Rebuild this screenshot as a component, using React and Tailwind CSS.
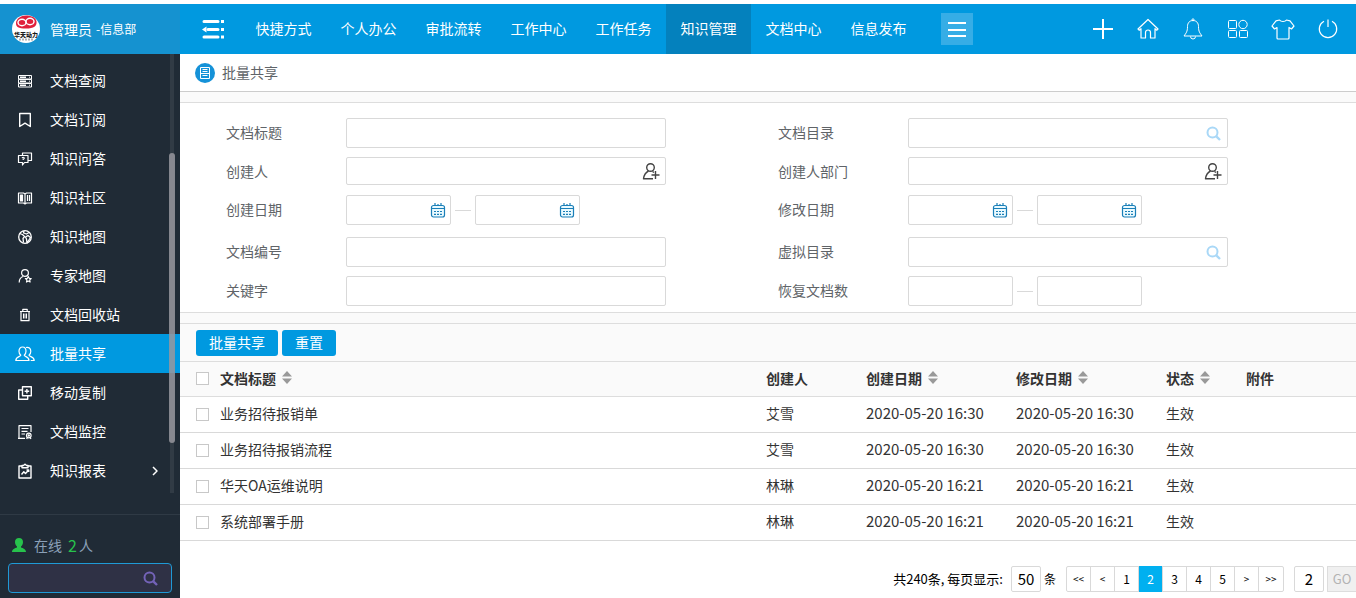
import clsx from 'clsx'

const menus = ['快捷方式', '个人办公', '审批流转', '工作中心', '工作任务', '知识管理', '文档中心', '信息发布']

const rows = [
  { title: '业务招待报销单', author: '艾雪', date: '2020-05-20 16:30', status: '生效' },
  { title: '业务招待报销流程', author: '艾雪', date: '2020-05-20 16:30', status: '生效' },
  { title: '华天OA运维说明', author: '林琳', date: '2020-05-20 16:21', status: '生效' },
  { title: '系统部署手册', author: '林琳', date: '2020-05-20 16:21', status: '生效' },
]

const pages = ['<<', '<', '1', '2', '3', '4', '5', '>', '>>']

function Svg({ size = 16, w, children, className, sw = 1.2 }) {
  return (
    <svg
      width={w || size}
      height={size}
      viewBox={`0 0 ${w || size} ${size}`}
      fill="none"
      stroke="currentColor"
      strokeWidth={sw}
      strokeLinejoin="round"
      className={className}
      aria-hidden="true"
    >
      {children}
    </svg>
  )
}

/* Sidebar icons */
const DocsIcon = () => (
  <Svg sw={1}>
    <path d="M1.500 2.500h13v3.500h-13zM1.500 6.500h13v3.500h-13zM1.500 10.500h13v3.500h-13z" />
    <path d="M3 4.200h6M3 8.200h6M3 12.200h6" strokeWidth="1.500" />
    <path d="M12 4.200h1M12 8.200h1M12 12.200h1" />
  </Svg>
)
const BookmarkIcon = () => (
  <Svg sw={1.4}><path d="M2.7 1.5h10.6v13L8 11.2l-5.3 3.3z" /></Svg>
)
const QaIcon = () => (
  <Svg>
    <path d="M5.500 4.500V2h9v7.500H11" />
    <path d="M1.500 4.500H11v7H7.500L5.500 14v-2.500h-4z" />
    <path d="M5 7q1.300-1.500 2.300 0q0 .8-1.100 1.300v.6" />
  </Svg>
)
const BookIcon = () => (
  <Svg>
    <path d="M1.500 3h5L8 4l1.500-1h5v10h-5L8 14l-1.500-1h-5zM8 4v10" />
    <path d="M3.500 5h2v6h-2z" fill="currentColor" />
    <path d="M10.500 5v6M12.500 5v6" />
  </Svg>
)
const GlobeIcon = () => (
  <Svg sw={1.300}>
    <circle cx="8" cy="8" r="6.300" />
    <path d="M2.500 4.500l3 1 2 2-1.500 2 .5 4" />
    <path d="M7 2l-.5 2 3 1L12 3.500M10 14l-.5-4L8.500 8l2.500-1.500 2.500 2z" />
  </Svg>
)
const ExpertIcon = () => (
  <Svg>
    <circle cx="8" cy="5" r="3.400" />
    <path d="M2.200 14.500c0-3.500 1.800-5.300 3.800-6" />
    <path d="M11.300 8.500l.9 1.800 2 .2-1.500 1.400.4 2.100-1.800-1-1.800 1 .4-2.100-1.500-1.400 2-.2z" />
  </Svg>
)
const TrashIcon = () => (
  <Svg>
    <path d="M3 4.500h10M5.800 4V2.300h4.400V4M4 4.500v9.200h8V4.500" />
    <path d="M6.500 6.500v5M8 6.500v5M9.500 6.500v5" strokeWidth="1" />
  </Svg>
)
const UsersIcon = () => (
  <Svg size={16} w={20}>
    <path d="M5.800 9.300C4.500 8.200 4 6.800 4 5.200 4 2.700 5.500 1 7.500 1S11 2.700 11 5.200c0 1.600-.5 3-1.800 4.100 0 1.200 4.800 1.200 4.800 5.200H.8c0-4 5-4 5-5.200z" />
    <path d="M11 1.500c2.800-.8 4.800 1 4.800 3.700 0 1.600-.5 3-1.800 4.100 0 1.200 5.200 1.200 5.200 5.200h-3.500" />
  </Svg>
)
const CopyIcon = () => (
  <Svg sw={1.400}>
    <path d="M5.500 1.700h8.800v9H5.500zM5.500 5H1.700v9.300h9v-3.600M9.900 3.900v4.600M7.600 6.200h4.600" />
  </Svg>
)
const MonitorIcon = () => (
  <Svg>
    <path d="M14 8V1.700H2v12.600h6M1 14.300h7M4.500 4.500h7M4.500 7.300h6M4.500 10h3.500" />
    <circle cx="11.800" cy="11.500" r="2.300" />
    <circle cx="11.800" cy="11.500" r=".6" />
    <path d="M10.300 13.500l-.6 1.500M13.300 13.500l.6 1.500" />
  </Svg>
)
const ReportIcon = () => (
  <Svg sw={1.400}>
    <path d="M5 3H2v12h12V3h-3" />
    <path d="M5 4.800V2.500h1.700Q8 0 9.300 2.500H11v2.300z" />
    <path d="M4.500 11.500l2.300-2.800 1.700 1.800 3-3.300M9.500 7h2.200v2" />
  </Svg>
)

const sideItems = [
  { label: '文档查阅', Icon: DocsIcon },
  { label: '文档订阅', Icon: BookmarkIcon },
  { label: '知识问答', Icon: QaIcon },
  { label: '知识社区', Icon: BookIcon },
  { label: '知识地图', Icon: GlobeIcon },
  { label: '专家地图', Icon: ExpertIcon },
  { label: '文档回收站', Icon: TrashIcon },
  { label: '批量共享', Icon: UsersIcon, active: true },
  { label: '移动复制', Icon: CopyIcon },
  { label: '文档监控', Icon: MonitorIcon },
  { label: '知识报表', Icon: ReportIcon, more: true },
]

/* Header tools */
const tools = [
  { label: '新建', icon: <Svg size={22} sw={2}><path d="M11 1v20M1 11h20" /></Svg> },
  {
    label: '首页',
    icon: (
      <Svg size={22}>
        <path d="M1 11L11 1.500 21 11l-1.300 1.200-1.700-1.500V20h-4.500v-5.500a2.500 2.500 0 0 0-5 0V20H4v-9.300l-1.700 1.500z" />
      </Svg>
    ),
  },
  {
    label: '消息',
    icon: (
      <Svg size={22} sw={1}>
        <path d="M11 2.500c-3.500 0-5.500 2.500-5.500 6 0 5.500-1.500 6.500-3.500 9.500h18c-2-3-3.500-4-3.500-9.500 0-3.500-2-6-5.500-6z" />
        <circle cx="11" cy="1.800" r="1" />
        <path d="M8.500 18.500a2.500 2.500 0 0 0 5 0" />
      </Svg>
    ),
  },
  {
    label: '应用',
    icon: (
      <Svg size={22} sw={1}>
        <rect x="1.500" y="2.500" width="8" height="8" rx="1" />
        <circle cx="16" cy="6.500" r="4.200" />
        <rect x="1.500" y="12.500" width="8" height="7" rx="1" />
        <rect x="12.500" y="12.500" width="8" height="7" rx="1" />
      </Svg>
    ),
  },
  {
    label: '皮肤',
    icon: (
      <Svg size={22} w={24}>
        <path d="M8.500 2C10 4 14 4 15.500 2l3.500.8L23 8l-2.500 3-2.500-1.500V20q0 1-1 1H7q-1 0-1-1V9.500L3.500 11 1 8l4-5.200z" />
      </Svg>
    ),
  },
  {
    label: '退出',
    icon: (
      <Svg size={22}>
        <path d="M7 3.200a8.700 8.700 0 1 0 8 0M11 1.500v7.500" />
      </Svg>
    ),
  },
]

function Logo() {
  return (
    <svg width="28" height="28" viewBox="0 0 28 28" aria-hidden="true">
      <circle cx="14" cy="14" r="14" fill="#fff" />
      <path d="M14 .5c4 0 10 1.500 10.500 6C25 11 22 13.500 14 13.500S4 12 4 8 9 .5 14 .5z" fill="#e0203c" />
      <ellipse cx="10" cy="7.500" rx="4" ry="3.200" fill="none" stroke="#fff" strokeWidth="1.400" />
      <ellipse cx="18" cy="6.500" rx="4" ry="3.200" fill="none" stroke="#fff" strokeWidth="1.400" />
      <text x="14" y="21.500" textAnchor="middle" fontSize="6" fontWeight="900" fill="#1b1b1b">华天动力</text>
      <path d="M7 24.500h14" stroke="#b0b0b0" strokeWidth="2" strokeDasharray="2 1" />
    </svg>
  )
}

function SearchGlyph({ className }) {
  return (
    <Svg size={15} sw={2} className={className}>
      <circle cx="6.500" cy="6.500" r="5" />
      <path d="M10.300 10.300l3.700 3.700" strokeWidth="2.400" />
    </Svg>
  )
}

function UserAdd() {
  return (
    <Svg size={18} className="text-[#444]" sw={1.400}>
      <circle cx="8.500" cy="5.500" r="3.800" />
      <path d="M6.500 9C3.500 10.500 2 13 1.500 16.800H11M10.500 9.500l1.500 1M13.500 9v8M9.500 13h8" />
    </Svg>
  )
}

function Calendar() {
  return (
    <Svg size={16} className="text-[#1a7fb8]">
      <rect x="1.500" y="3.500" width="13" height="11.500" rx="2" fill="#eafaff" />
      <path d="M1.500 6.500h13M5 1v3M8 2v2M11 1v3" />
      <path d="M4 9.500h8M4 12.300h8" strokeDasharray="2 1" />
    </Svg>
  )
}

const glyphs = { search: <SearchGlyph className="text-[#a9d8f7]" />, user: <UserAdd />, date: <Calendar /> }

function Box({ id, label, icon, className }) {
  return (
    <div className={clsx('flex items-center rounded-xs border border-[#d9d9d9] bg-white', className)}>
      <input id={id} aria-label={label} className="h-full w-full min-w-0 flex-1 px-2 outline-none" />
      {icon && (
        <button type="button" aria-label="选择" className={icon === 'date' ? 'pr-1' : icon === 'user' ? 'pr-[5px]' : 'pr-1.5'}>
          {glyphs[icon]}
        </button>
      )}
    </div>
  )
}

function Field({ id, label, type, icon, wide, className }) {
  return (
    <div className={clsx('flex items-start', className)}>
      <label htmlFor={id} className={clsx('shrink-0 leading-7', wide ? 'w-[130px]' : 'w-[120px]')}>
        {label}
      </label>
      {type === 'range' ? (
        <div className="flex items-center">
          <Box id={id} icon={icon} className="h-[30px] w-[105px]" />
          <span className="mx-1 h-px w-4 bg-[#d9d9d9]" />
          <Box label={`${label}止`} icon={icon} className="h-[30px] w-[105px]" />
        </div>
      ) : (
        <Box id={id} icon={icon} className={clsx('w-full max-w-80', icon === 'user' ? 'h-[28px]' : 'h-[30px]')} />
      )}
    </div>
  )
}

function SortHead({ children, className }) {
  return (
    <th className={clsx('font-bold', className)}>
      <button type="button" className="flex items-center gap-1.5">
        {children}
        <svg width="10" height="13" viewBox="0 0 10 13" fill="#999" aria-hidden="true">
          <path d="M5 0l5 5.500H0zM0 7.500h10L5 13z" />
        </svg>
      </button>
    </th>
  )
}

function Check({ label }) {
  return (
    <input
      type="checkbox"
      aria-label={label}
      className="block size-[13px] appearance-none border border-[#c8c8c8] bg-white checked:bg-[#0099e0]"
    />
  )
}

function Header() {
  return (
    <header className="flex h-[50px] shrink-0 bg-[#0099e0] text-white">
      <div className="flex w-[180px] shrink-0 items-center bg-[#1592d0] pl-3">
        <Logo />
        <span className="ml-[10px]">管理员</span>
        <span className="ml-1 text-xs">-信息部</span>
      </div>
      <button type="button" aria-label="收起菜单" className="flex w-[61px] shrink-0 items-center pl-[22px]">
        <Svg size={20} w={23} sw={3}>
          <path d="M2 2.500h14M6 10.500h10M2 18h14" strokeLinecap="round" />
          <path d="M0 10.500L4.500 7.500v6z" fill="currentColor" stroke="none" />
          <path d="M20.500 1v3M20.500 9v3M20.500 16.500v3" />
        </Svg>
      </button>
      <nav className="flex">
        {menus.map((m) => (
          <a
            key={m}
            href="#"
            className={clsx('flex w-[85px] items-center justify-center pb-0.5', m === '知识管理' && 'bg-[#0481bd]')}
          >
            {m}
          </a>
        ))}
      </nav>
      <button type="button" aria-label="更多" className="ml-5 flex size-8 items-center justify-center self-center bg-[#36ade6]">
        <Svg size={18} sw={2}><path d="M0 3h18M0 10h18M0 16h18" /></Svg>
      </button>
      <div className="ml-auto flex pr-1.5">
        {tools.map((t) => (
          <button key={t.label} type="button" aria-label={t.label} className="flex w-[45px] items-center justify-center">
            {t.icon}
          </button>
        ))}
      </div>
    </header>
  )
}

function Sidebar() {
  return (
    <aside className="flex w-[180px] shrink-0 flex-col bg-[#202b36] text-white">
      <nav className="relative flex-1 pt-[7px]">
        {sideItems.map(({ label, Icon, active, more }) => (
          <a key={label} href="#" className={clsx('flex h-[39px] items-center', active && 'bg-[#0099e0]')}>
            <span className="flex w-[50px] justify-center">
              <Icon />
            </span>
            <span className="pb-0.5">{label}</span>
            {more && (
              <Svg size={10} className="mr-5 ml-auto" sw={1.500}><path d="M3 1l4 4-4 4" /></Svg>
            )}
          </a>
        ))}
        {/* scrollbar overlay */}
        <div className="absolute top-0 right-[6px] bottom-[21px] w-1 bg-white/8" />
        <div className="absolute top-[99px] right-[5px] h-[290px] w-1.5 rounded-sm bg-[#96969e]/85" />
      </nav>
      <div className="border-t border-[#2f3a45] px-2 pt-5 pb-[5px]">
        <div className="flex h-5 items-center pl-1 text-[#8ba0b8]">
          <svg width="14" height="14" viewBox="0 0 14 14" fill="#27c24c" aria-hidden="true">
            <path d="M7 0c2.500 0 4 1.500 4 4 0 2-1 3.500-2 4.500v1c2 .7 5 1.500 5 4.500H0c0-3 3-3.800 5-4.500v-1C4 7.500 3 6 3 4c0-2.500 1.500-4 4-4z" />
          </svg>
          <span className="ml-2">在线</span>
          <span className="mr-0.5 ml-1.5 text-base text-[#27c24c]">2</span>人
        </div>
        <div className="mt-2 flex h-[30px] items-center rounded-sm border border-[#1f9ad6] bg-[#2f3145]">
          <input aria-label="搜索" className="h-full min-w-0 flex-1 px-2 outline-none" />
          <button type="button" aria-label="查找" className="pr-[13px]">
            <SearchGlyph className="text-[#7463b8]" />
          </button>
        </div>
      </div>
    </aside>
  )
}

export default function App() {
  return (
    <div className="flex min-h-screen flex-col overflow-x-hidden bg-white pt-1 font-['Noto_Sans_CJK_SC',sans-serif] text-sm">
      <Header />
      <div className="flex flex-1">
        <Sidebar />
        <main className="flex min-w-0 flex-1 flex-col text-[#333]">
          <div className="flex h-[38px] items-center border-b border-[#ccc] pl-[15px] text-[#606468]">
            <svg width="20" height="20" viewBox="0 0 20 20" fill="none" stroke="#fff" aria-hidden="true">
              <circle cx="10" cy="10" r="10" fill="#1592d8" stroke="none" />
              <path d="M5.500 4.500h9v11h-9zM5.500 10.500h9M7.500 6.500h5M7.500 8.500h5M7.500 12.500h5" />
            </svg>
            <h1 className="ml-[7px] pb-0.5">批量共享</h1>
          </div>

          <div className="h-[11px] border-b border-[#ddd] bg-[#fafafa]" />

          {/* Filters */}
          <form className="grid grid-cols-2 border-b border-[#ddd] pt-[15px] pr-[26px] pb-1.5 pl-[46px] text-[#606468]">
            <Field id="title" label="文档标题" className="h-[39px]" />
            <Field id="dir" label="文档目录" icon="search" wide />
            <Field id="creator" label="创建人" icon="user" className="h-[38px]" />
            <Field id="dept" label="创建人部门" icon="user" wide />
            <Field id="created" label="创建日期" type="range" icon="date" className="h-[42px]" />
            <Field id="updated" label="修改日期" type="range" icon="date" wide />
            <Field id="code" label="文档编号" className="h-[39px]" />
            <Field id="vdir" label="虚拟目录" icon="search" wide />
            <Field id="keyword" label="关键字" className="h-[30px]" />
            <Field id="restore" label="恢复文档数" type="range" wide />
          </form>

          <div className="h-[11px] border-b border-[#ddd] bg-[#fafafa]" />

          <div className="flex h-[38px] items-center gap-1 border-b border-[#ddd] bg-[#fafafa] pl-4">
            <button type="button" className="h-[26px] rounded-[3px] bg-[#0099e0] px-[13px] pb-0.5 text-white">批量共享</button>
            <button type="button" className="h-[26px] rounded-[3px] bg-[#0099e0] px-[13px] pb-0.5 text-white">重置</button>
          </div>

          <table className="w-full table-fixed border-collapse text-left">
            <colgroup>
              <col className="w-10" />
              <col />
              <col className="w-[100px]" />
              <col className="w-[150px]" />
              <col className="w-[150px]" />
              <col className="w-[80px]" />
              <col className="w-[110px]" />
            </colgroup>
            <thead>
              <tr className="h-[34px] border-b border-[#ddd] bg-[#fafafa]">
                <th className="pl-4"><Check label="全选" /></th>
                <SortHead className="pb-0.5">文档标题</SortHead>
                <th className="pb-0.5 font-bold">创建人</th>
                <SortHead className="pb-0.5">创建日期</SortHead>
                <SortHead className="pb-0.5">修改日期</SortHead>
                <SortHead className="pb-0.5">状态</SortHead>
                <th className="pb-0.5 font-bold">附件</th>
              </tr>
            </thead>
            <tbody>
              {rows.map((r) => (
                <tr key={r.title} className="h-9 border-b border-[#d9d9d9]">
                  <td className="pl-4"><Check label={r.title} /></td>
                  <td className="pb-0.5">{r.title}</td>
                  <td className="pb-0.5">{r.author}</td>
                  <td className="pb-0.5 text-[15px]">{r.date}</td>
                  <td className="pb-0.5 text-[15px]">{r.date}</td>
                  <td className="pb-0.5">{r.status}</td>
                  <td />
                </tr>
              ))}
            </tbody>
          </table>

          {/* Pagination */}
          <div className="mt-[25px] flex items-center justify-end text-xs text-black">
            <label htmlFor="size" className="mr-2 text-[13px]">共240条, 每页显示:</label>
            <input id="size" defaultValue="50" className="h-[26px] w-[30px] rounded-xs border border-[#d9d9d9] text-center text-[15px]" />
            <span className="mr-2.5 ml-[3px]">条</span>
            <nav className="flex h-[26px] rounded-xs border border-[#d9d9d9]">
              {pages.map((p) => (
                <button
                  key={p}
                  type="button"
                  className={clsx(
                    'w-6 border-r border-[#d9d9d9] text-center last:border-r-0',
                    p === '2' && '-my-px bg-[#00b0f0] text-white',
                    /[<>]/.test(p) && 'text-[10px]',
                  )}
                >
                  {p}
                </button>
              ))}
            </nav>
            <input aria-label="页码" defaultValue="2" className="ml-2.5 h-[26px] w-[30px] rounded-xs border border-[#d9d9d9] text-center text-[15px]" />
            <button type="button" className="ml-[3px] h-[26px] w-[29px] border border-r-0 border-[#ddd] bg-[#f0f0f0] text-[13px] text-[#b3b3b3]">
              GO
            </button>
          </div>
        </main>
      </div>
    </div>
  )
}
